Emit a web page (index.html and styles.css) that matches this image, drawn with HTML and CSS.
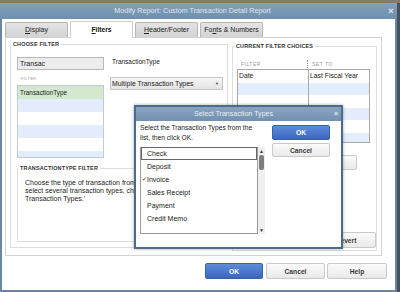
FILE: index.html
```html
<!DOCTYPE html>
<html lang="en">
<head>
<meta charset="utf-8">
<title>Modify Report</title>
<link rel="stylesheet" href="styles.css">
</head>
<body>
<div class="window">
  <div class="titlebar">
    <span class="title">Modify Report: Custom Transaction Detail Report</span>
    <span class="close">×</span>
  </div>
  <div class="client">
    <div class="tabs">
      <div class="tab"><u>D</u>isplay</div>
      <div class="tab active"><u>F</u>ilters</div>
      <div class="tab"><u>H</u>eader/Footer</div>
      <div class="tab">Fo<u>n</u>ts &amp; Numbers</div>
    </div>
    <div class="panel">
      <fieldset class="group choose">
        <legend>CHOOSE FILTER</legend>
        <div class="choose-body">
          <div class="choose-top">
            <div class="col-left">
              <div class="search">Transac</div>
              <div class="minor-label">FILTER</div>
              <div class="filter-list">
                <div class="frow sel">TransactionType</div>
                <div class="frow alt"></div>
                <div class="frow"></div>
                <div class="frow alt"></div>
                <div class="frow"></div>
                <div class="frow alt"></div>
              </div>
            </div>
            <div class="col-right">
              <div class="field-label">TransactionType</div>
              <div class="select"><span>Multiple Transaction Types</span><span class="caret">▼</span></div>
            </div>
          </div>
          <fieldset class="group desc">
            <legend>TRANSACTIONTYPE FILTER</legend>
            <p class="desc-text">Choose the type of transaction from<br>select several transaction types, choose 'Multiple<br>Transaction Types.'</p>
          </fieldset>
        </div>
      </fieldset>
      <fieldset class="group current">
        <legend>CURRENT FILTER CHOICES</legend>
        <div class="current-body">
          <div class="cf-head"><span>FILTER</span><span class="sep">SET TO</span></div>
          <div class="cf-table">
            <div class="cf-row"><span>Date</span><span class="c2">Last Fiscal Year</span></div>
            <div class="cf-row alt"><span></span><span class="c2"></span></div>
            <div class="cf-row"><span></span><span class="c2"></span></div>
            <div class="cf-row alt"><span></span><span class="c2"></span></div>
            <div class="cf-row"><span></span><span class="c2"></span></div>
            <div class="cf-row alt"><span></span><span class="c2"></span></div>
          </div>
          <div class="remove-wrap"><button class="btn grey remove">Remove Selected Filter</button></div>
          <button class="btn grey revert">Revert</button>
        </div>
      </fieldset>
    </div>
    <div class="actions">
      <button class="btn blue ok">OK</button>
      <button class="btn grey cancel">Cancel</button>
      <button class="btn grey help">Help</button>
    </div>
  </div>
</div>

<div class="dialog">
  <div class="dlg-title">
    <span class="title">Select Transaction Types</span>
    <span class="close">×</span>
  </div>
  <div class="dlg-body">
    <div class="dlg-main">
      <p class="dlg-text">Select the Transaction Types from the<br>list, then click OK.</p>
      <div class="dlg-list">
        <div class="items">
          <div class="item focus"><span class="ck"></span>Check</div>
          <div class="item"><span class="ck"></span>Deposit</div>
          <div class="item"><span class="ck">✓</span>Invoice</div>
          <div class="item"><span class="ck"></span>Sales Receipt</div>
          <div class="item"><span class="ck"></span>Payment</div>
          <div class="item"><span class="ck"></span>Credit Memo</div>
        </div>
        <div class="scrollbar">
          <span class="arrow">▲</span>
          <span class="thumb"></span>
          <span class="track"></span>
          <span class="arrow">▼</span>
        </div>
      </div>
    </div>
    <div class="dlg-buttons">
      <button class="btn blue dlg-ok">OK</button>
      <button class="btn grey dlg-cancel">Cancel</button>
    </div>
  </div>
</div>
</body>
</html>
```

FILE: styles.css
```css
* { box-sizing: border-box; }
html, body { margin: 0; padding: 0; }
body {
  width: 400px;
  height: 292px;
  overflow: hidden;
  position: relative;
  padding-top: 3px;
  background: linear-gradient(#8a7a60 0, #8a7a60 3px, #46525f 3px);
  font-family: "Liberation Sans", Arial, sans-serif;
  color: #1f1f1f;
}

/* main window */
.window {
  width: 397px;
  height: 289px;
  display: flex;
  flex-direction: column;
}
.titlebar {
  height: 16px;
  flex: none;
  display: flex;
  align-items: center;
  background: linear-gradient(#83a0bc, #6f8fae);
  color: #dfe6ee;
  font-size: 7.2px;
  line-height: 16px;
}
.titlebar .title { flex: 1; text-align: center; white-space: nowrap; }
.titlebar .close {
  width: 12px;
  text-align: center;
  font-size: 9px;
  font-weight: bold;
  color: #e4eaf0;
}
.client {
  flex: 1;
  background: #fff;
  border: 2px solid #6787a6;
  border-top: none;
  display: flex;
  flex-direction: column;
}

/* tabs */
.tabs {
  height: 18px;
  flex: none;
  display: flex;
  align-items: flex-end;
  gap: 2px;
  padding-left: 3px;
}
.tab {
  width: 63px;
  height: 15px;
  background: linear-gradient(#e4e4e4, #d3d3d3);
  border: 1px solid #b7b7b7;
  border-bottom: none;
  border-radius: 2px 2px 0 0;
  font-size: 7px;
  line-height: 14px;
  text-align: center;
  color: #222;
  white-space: nowrap;
}
.tab.active {
  height: 17px;
  margin-bottom: -1px;
  position: relative;
  z-index: 1;
  background: #fff;
  border-color: #cbcbcb;
  font-weight: bold;
  font-size: 6.7px;
  line-height: 16px;
  color: #111;
}

/* panel */
.panel {
  flex: none;
  margin-left: 3px;
  width: 377px;
  height: 219px;
  border: 1px solid #d3d3d3;
  display: flex;
  align-items: flex-start;
  gap: 4px;
  padding: 3px 0 0 4px;
}
.group {
  margin: 0;
  padding: 0;
  min-width: 0;
  border: 1px solid #dedede;
}
.group > legend {
  height: 7px;
  line-height: 7px;
  padding: 0 2px;
  margin-left: 0;
  font-size: 5.5px;
  font-weight: bold;
  color: #333;
  letter-spacing: 0.15px;
  white-space: nowrap;
}

/* choose filter */
.group.choose {
  width: 218px;
  height: 207px;
  flex: none;
}
.choose-body { padding: 9px 4px 0 6px; }
.choose-top { display: flex; gap: 6px; }
.col-left { width: 87px; flex: none; }
.col-right { width: 113px; flex: none; }
.search {
  height: 13px;
  border: 1px solid #b9b9b9;
  background: #ececec;
  font-size: 7px;
  line-height: 11px;
  padding-left: 2px;
  color: #222;
}
.minor-label {
  margin-top: 5px;
  height: 7px;
  line-height: 7px;
  font-size: 4px;
  letter-spacing: 0.3px;
  color: #9d9d9d;
  padding-left: 4px;
}
.filter-list {
  margin-top: 3px;
  height: 73px;
  border: 1px solid #bfcbd9;
  overflow: hidden;
}
.frow {
  height: 13px;
  line-height: 13px;
  font-size: 6.4px;
  padding-left: 2px;
  color: #222;
}
.frow.sel { background: #d4e8cf; }
.frow.alt { background: #e3edfb; }
.field-label {
  height: 10px;
  line-height: 10px;
  font-size: 6.5px;
  padding-left: 2px;
  color: #222;
}
.select {
  margin-top: 10px;
  height: 13px;
  border: 1px solid #c6c6c6;
  background: linear-gradient(#f5f5f5, #e4e4e4);
  font-size: 6.9px;
  line-height: 11px;
  padding: 0 3px 0 1px;
  display: flex;
  justify-content: space-between;
  color: #1a1a1a;
  white-space: nowrap;
}
.select .caret { font-size: 4px; color: #444; }

.group.desc {
  margin-top: 7px;
  height: 77px;
  width: 205px;
  overflow: hidden;
}
.desc-text {
  margin: 0;
  width: 116px;
  overflow: hidden;
  padding: 7px 0 0 7px;
  font-size: 7px;
  line-height: 8px;
  white-space: nowrap;
  color: #222;
}

/* current filter choices */
.group.current {
  width: 145px;
  height: 208px;
  margin-top: 2px;
  flex: none;
}
.group.current > legend { margin-left: 1px; }
.current-body {
  padding: 10px 0 0 4px;
  display: flex;
  flex-direction: column;
  align-items: flex-start;
}
.cf-head {
  width: 133px;
  height: 8px;
  display: grid;
  grid-template-columns: 70px 63px;
  font-size: 5px;
  line-height: 8px;
  letter-spacing: 0.5px;
  color: #9a9a9a;
}
.cf-head span { padding-left: 4px; }
.cf-head .sep { border-left: 1px dotted #8f8f8f; }
.cf-table {
  margin-top: 1px;
  width: 133px;
  height: 74px;
  border: 1px solid #a8a8a8;
  overflow: hidden;
}
.cf-row {
  height: 12.5px;
  display: grid;
  grid-template-columns: 70px 61px;
  font-size: 6.8px;
  line-height: 12.5px;
  color: #1a1a1a;
  white-space: nowrap;
}
.cf-row.alt { background: #e3edfb; }
.cf-row span { padding-left: 1px; }
.cf-row .c2 { border-left: 1px solid #a8a8a8; padding-left: 1px; }
.remove-wrap {
  margin-top: 12px;
  width: 133px;
  display: flex;
  justify-content: center;
}

/* buttons */
.btn {
  margin: 0;
  padding: 0;
  font-family: inherit;
  font-size: 6.7px;
  font-weight: bold;
  border: 1px solid;
  border-radius: 2px;
  white-space: nowrap;
}
.btn.blue {
  background: linear-gradient(#5e8cd9, #3b66bf);
  border-color: #3a60ab;
  color: #fff;
}
.btn.grey {
  background: linear-gradient(#fbfbfb, #e9e9e9);
  border-color: #c9c9c9;
  color: #3a3a3a;
}
.remove { width: 107px; height: 15px; }
.revert {
  margin-top: 62px;
  align-self: flex-end;
  width: 60px;
  height: 16px;
}
.actions {
  margin-top: 7px;
  display: flex;
  justify-content: flex-end;
  padding-right: 8px;
}
.actions .btn { height: 16px; }
.ok { width: 58px; }
.cancel { width: 59px; margin-left: 3px; }
.help { width: 60px; margin-left: 2px; }

/* dialog */
.dialog {
  position: absolute;
  left: 134px;
  top: 105px;
  width: 209px;
  height: 144px;
  border: 2px solid #4b6c8c;
  background: #fff;
  box-shadow: 0 0 3px rgba(0, 0, 0, 0.35);
  display: flex;
  flex-direction: column;
}
.dlg-title {
  height: 14px;
  flex: none;
  display: flex;
  align-items: center;
  background: linear-gradient(#88a4c0, #7291b0);
  color: #e9eef3;
  font-size: 7.1px;
  line-height: 14px;
}
.dlg-title .title { flex: 1; text-align: center; white-space: nowrap; }
.dlg-title .close {
  width: 10px;
  text-align: center;
  font-size: 8px;
  font-weight: bold;
  color: #dfe6ed;
}
.dlg-body {
  display: flex;
  padding: 2px 0 0 4px;
}
.dlg-main { width: 125px; flex: none; }
.dlg-text {
  margin: 0;
  font-size: 6.7px;
  line-height: 10px;
  color: #222;
  white-space: nowrap;
}
.dlg-list {
  margin-top: 4px;
  height: 87px;
  display: flex;
}
.items {
  flex: 1;
  border: 1px solid #9a9a9a;
  border-top: none;
}
.item {
  height: 13px;
  line-height: 13px;
  font-size: 7px;
  padding-left: 1px;
  display: flex;
  color: #222;
  white-space: nowrap;
}
.item.focus { border: 1px solid #666; line-height: 11px; padding-left: 0; }
.item .ck { width: 5px; flex: none; font-size: 6px; }
.scrollbar {
  width: 7px;
  flex: none;
  background: #efefef;
  display: flex;
  flex-direction: column;
  align-items: center;
}
.scrollbar .arrow {
  height: 8px;
  line-height: 8px;
  font-size: 5px;
  color: #333;
}
.scrollbar .thumb {
  width: 5px;
  height: 15px;
  background: #7d7d7d;
  border-radius: 2px;
}
.scrollbar .track { flex: 1; }
.dlg-buttons {
  margin-left: 7px;
  padding-top: 2px;
  display: flex;
  flex-direction: column;
  gap: 3px;
}
.dlg-ok { width: 58px; height: 15px; }
.dlg-cancel { width: 58px; height: 14px; }
```
